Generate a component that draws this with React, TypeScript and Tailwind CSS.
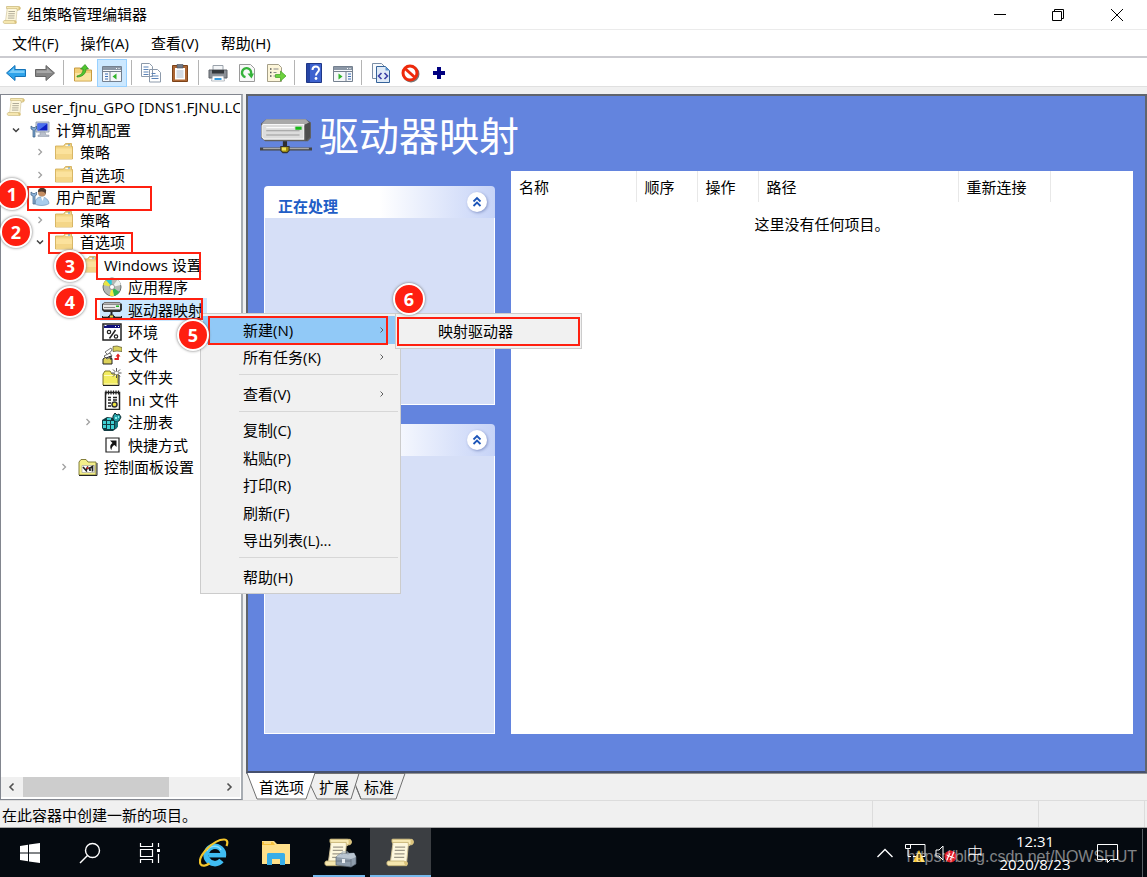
import type { ReactNode } from "react";

type IconName =
    | "scroll"
    | "computer"
    | "user"
    | "folder"
    | "disc"
    | "drive"
    | "env"
    | "file"
    | "newFolder"
    | "ini"
    | "registry"
    | "shortcut"
    | "panel";

interface TreeNode {
    label: string;
    icon: IconName;
    level: number;
    state?: "open" | "closed";
    selected?: boolean;
}

const nodes: TreeNode[] = [
    { label: "user_fjnu_GPO [DNS1.FJNU.LOCAL]", icon: "scroll", level: 0 },
    { label: "计算机配置", icon: "computer", level: 1, state: "open" },
    { label: "策略", icon: "folder", level: 2, state: "closed" },
    { label: "首选项", icon: "folder", level: 2, state: "closed" },
    { label: "用户配置", icon: "user", level: 1, state: "open" },
    { label: "策略", icon: "folder", level: 2, state: "closed" },
    { label: "首选项", icon: "folder", level: 2, state: "open" },
    { label: "Windows 设置", icon: "folder", level: 3, state: "open" },
    { label: "应用程序", icon: "disc", level: 4 },
    { label: "驱动器映射", icon: "drive", level: 4, selected: true },
    { label: "环境", icon: "env", level: 4 },
    { label: "文件", icon: "file", level: 4 },
    { label: "文件夹", icon: "newFolder", level: 4 },
    { label: "Ini 文件", icon: "ini", level: 4 },
    { label: "注册表", icon: "registry", level: 4, state: "closed" },
    { label: "快捷方式", icon: "shortcut", level: 4 },
    { label: "控制面板设置", icon: "panel", level: 3, state: "closed" },
];

const indents = ["pl-0", "pl-[3px]", "pl-[27px]", "pl-[51px]", "pl-[75px]"];

const columns = [
    { label: "名称", width: "w-[125px]" },
    { label: "顺序", width: "w-[61px]" },
    { label: "操作", width: "w-[61px]" },
    { label: "路径", width: "w-[200px]" },
    { label: "重新连接", width: "w-[92px]" },
];

interface MenuEntry {
    label: string;
    height: string;
    sub?: boolean;
    active?: boolean;
}

const menuGroups: MenuEntry[][] = [
    [
        { label: "新建(N)", height: "h-7", sub: true, active: true },
        { label: "所有任务(K)", height: "h-[27px]", sub: true },
    ],
    [{ label: "查看(V)", height: "h-7", sub: true }],
    [
        { label: "复制(C)", height: "h-[27px]" },
        { label: "粘贴(P)", height: "h-7" },
        { label: "打印(R)", height: "h-[27px]" },
        { label: "刷新(F)", height: "h-7" },
        { label: "导出列表(L)...", height: "h-[27px]" },
    ],
    [{ label: "帮助(H)", height: "h-7" }],
];

const marks = [
    { n: 1, badge: "left-[-4px] top-[178px]", box: "left-[27px] top-[186px] w-[125px] h-[25px]" },
    { n: 2, badge: "left-0 top-[216px]", box: "left-[48px] top-[232px] w-[85px] h-[22px]" },
    { n: 3, badge: "left-[54px] top-[250px]", box: "left-[96px] top-[252px] w-[105px] h-[28px]" },
    { n: 4, badge: "left-[54px] top-[286px]", box: "left-[95px] top-[298px] w-[108px] h-[22px]" },
    { n: 5, badge: "left-[177px] top-[319px]", box: "left-[208px] top-[316px] w-[180px] h-[29px]" },
    { n: 6, badge: "left-[393px] top-[283px]", box: "left-[397px] top-[317px] w-[183px] h-[29px]" },
];

function Scroll({ size = 20 }: { size?: number }) {
    return (
        <svg width={size} height={size} viewBox="0 0 20 20">
            <path d="M5 1.500h11v4h-1L14 16H3.500L5 5z" fill="#fdf7dd" stroke="#cdbf94" strokeWidth=".6" />
            <path d="M4.500 1.500H17c1.800 0 1.800 3.500 0 3.500h-2V3.500H4.500z" fill="#f7e9b4" stroke="#c7b579" strokeWidth=".6" />
            <path d="M16.500 1.500c2.500 0 2.500 3.500 0 3.500z" fill="#dbc37c" />
            <path d="M2 15.500h10.500l1.500 3H2.500c-1.500 0-1.700-2.500-.500-3z" fill="#f5e6ae" stroke="#c7b579" strokeWidth=".6" />
            <path d="M12.500 15.500c2.500 0 3 2 1.500 3-1.500-.500-2-1.500-1.500-3z" fill="#dbc37c" />
            <path d="M6.500 6.500h6.500M6.300 8.700h6.500M6.100 10.900h6.500M5.900 13.100h6.500" stroke="#9d9888" strokeWidth=".8" />
        </svg>
    );
}

function DriveArt({ width, height }: { width: number; height: number }) {
    return (
        <svg width={width} height={height} viewBox="0 0 50 34">
            <path d="M6 1h38l5 3v15l-3 3H5l-4-3V5z" fill="#5f5f5f" />
            <path d="M6 1h38l3 3-4 3H3L2 5z" fill="#a9a9a9" />
            <path d="M3 6h39v14H4l-2-2V7z" fill="#dcdcdc" stroke="#f7f7f7" />
            <path d="M43 6l5-2v14l-4 4z" fill="#4d4d4d" />
            <path d="M6 12h32M6 16h32" stroke="#9a9a9a" />
            <path d="M6 9h27" stroke="#fff" />
            <rect x="34" y="8" width="6" height="3" fill="#18b818" />
            <path d="M24 22v5" stroke="#303030" strokeWidth="4" />
            <path d="M0 29.500h50" stroke="#454545" strokeWidth="3" />
            <path d="M3 29h44" stroke="#a8a8a8" strokeWidth="1.500" />
            <path d="M20 27h8v4l-2 2h-4l-2-2z" fill="#9c8b10" stroke="#333" />
            <rect x="21" y="28" width="4" height="3" fill="#f2e25b" />
        </svg>
    );
}

function TreeIcon({ name }: { name: IconName }) {
    if (name === "scroll") return <Scroll size={20} />;
    const art: Record<Exclude<IconName, "scroll">, ReactNode> = {
        folder: (
            <>
                <path d="M1.500 4h8l2-2.500h6v3h1V17h-17z" fill="#f3d583" stroke="#cfa84e" strokeWidth=".8" />
                <path d="M11 2.500h5.500v2h-5.500z" fill="#fffbe8" stroke="#d9b962" strokeWidth=".5" />
                <path d="M14 2.500h2v1h-2z" fill="#4f94c9" />
                <path d="M2 6.500h16V16.500H2z" fill="#fbe29d" />
                <path d="M2 12h16v4.500H2z" fill="#f4d688" />
            </>
        ),
        drive: (
            <>
                <path d="M3 2h14l3 2v6l-2 2H2l-2-2V4z" fill="#333" />
                <path d="M3 2.500h14l2 1.500H1z" fill="#b5b5b5" />
                <path d="M1 4.500h17v5H2l-1-1z" fill="#e9e9e9" />
                <path d="M2 7.500h11" stroke="#8a8a8a" />
                <rect x="14" y="5.500" width="3" height="1.500" fill="#1fb51f" />
                <path d="M9.500 12v3" stroke="#222" strokeWidth="2" />
                <path d="M0 17h20" stroke="#222" strokeWidth="2" />
                <path d="M1 16.500h5M13 16.500h6" stroke="#a8a8a8" />
                <path d="M7.500 15h4v3h-4z" fill="#e8d640" stroke="#333" />
            </>
        ),
        computer: (
            <>
                <path d="M6 2h13v10H6z" fill="#d4dbe4" stroke="#8492a5" strokeWidth=".8" />
                <path d="M7.500 3.500h10v7h-10z" fill="#0d20c4" />
                <path d="M7.500 3.500h10l-9 7h-1z" fill="#4a70ee" />
                <path d="M10 12h5l1 3h3v1.500H8V15h2z" fill="#b9c0cb" stroke="#8993a2" strokeWidth=".5" />
                <path d="M1 6v3l2 1v7h2v-7l1.500-1V6L5 7.500H3z" fill="#7ca5cf" stroke="#35597e" strokeWidth=".7" />
            </>
        ),
        user: (
            <>
                <circle cx="12" cy="5.500" r="4" fill="#c58f64" />
                <path d="M8 5c-.500-5 7-5.500 8.200-1.500L15.500 7c-1-3-4-3-7.500-2z" fill="#4b3a30" />
                <path d="M5 17c0-5 3-7 6-7 5 0 7.500 3 8 6.500-3 2.500-11 2.500-14 .500z" fill="#a9cdec" stroke="#6a93ba" strokeWidth=".7" />
                <path d="M11 10l1.500 4L14 10z" fill="#fff" />
                <path d="M1 5v3l2 1v8h2V9l1.500-1V5L5 6.500H3z" fill="#8db1d6" stroke="#3f6185" strokeWidth=".7" />
            </>
        ),
        disc: (
            <>
                <circle cx="10" cy="10" r="9" fill="#b4b9b4" stroke="#666a6a" />
                <path d="M10 10L4 3.200C6 1.500 8 1 9.500 1z" fill="#28c8d8" />
                <path d="M10 10L1.200 8C1.700 6 2.700 4.300 4 3.200z" fill="#e9e442" />
                <path d="M10 10l7.500 5c-1.500 2-3.500 3.500-5.500 4z" fill="#32b650" />
                <path d="M10 10l2 9c-1.500.200-3.500 0-4.500-.400z" fill="#f4ef42" />
                <path d="M10 10L18.900 8c-.500-2-1.500-4-3.400-5.200z" fill="#edf1ed" />
                <circle cx="10" cy="10" r="2.500" fill="#fff" stroke="#777" strokeWidth=".7" />
            </>
        ),
        env: (
            <>
                <path d="M1 2h18v16H1z" fill="#fff" stroke="#222" strokeWidth="1.500" />
                <path d="M2 3h16v3H2z" fill="#10107c" />
                <path d="M2.500 3.500h2M13 4.500h1M16 4.500h1" stroke="#fff" />
                <path d="M13.500 8l-6 8.500" stroke="#222" strokeWidth="1.500" />
                <circle cx="7" cy="10" r="1.700" fill="none" stroke="#222" strokeWidth="1.200" />
                <circle cx="14" cy="14.500" r="1.700" fill="none" stroke="#222" strokeWidth="1.200" />
            </>
        ),
        file: (
            <>
                <path d="M11 1.500l4-.500 5 1.500v4l-5-.500-4 .500z" fill="#d9d05c" stroke="#55502a" strokeWidth=".7" />
                <path d="M3 7l6-4 1 2-4 5z" fill="#fff" stroke="#555" strokeWidth=".8" />
                <path d="M1 14l3-2 6 1.500V19H1z" fill="#ddd25a" stroke="#222" />
                <path d="M2 11l6-3 2 3-5 3z" fill="#fff" stroke="#333" strokeWidth=".7" />
                <path d="M4 13l5-2v4" fill="none" stroke="#222" />
                <path d="M12.500 14h3.500v-3" fill="none" stroke="#e32020" strokeWidth="1.800" />
                <path d="M13.500 11.500L16 8.500l2.500 3z" fill="#e32020" />
            </>
        ),
        newFolder: (
            <>
                <path d="M1 7l2-3h5l2 3h6v11H1z" fill="#f2ec60" stroke="#6f6a20" strokeWidth=".9" />
                <path d="M2 8.500h13M2 17h14" stroke="#fffbc0" />
                <path d="M1 18.500h16V8" fill="none" stroke="#222" />
                <path d="M14.500 1v10M9.500 6h10M11 2.500l7 7M18 2.500l-7 7" stroke="#444" strokeWidth=".9" />
                <circle cx="14.500" cy="6" r="1.600" fill="#fff" />
            </>
        ),
        ini: (
            <>
                <path d="M3.500 2.500h14v17h-14z" fill="#fff" stroke="#222" strokeWidth="1.500" />
                <path d="M4 .500v4M6.500.500v4M9 .500v4M11.500.500v4M14 .500v4M16.500.500v4" stroke="#222" strokeWidth="1.200" />
                <path d="M6 7.500h3M11 7.500h4M6 10h3M11 10h4M6 13h3M6 16h3" stroke="#222" strokeWidth="1.500" />
                <circle cx="12.500" cy="14.500" r="2.500" fill="#f0e540" stroke="#333" strokeWidth="1.500" />
            </>
        ),
        registry: (
            <>
                <path d="M0 8l5-3 8 1 2 2v8l-4 3H2l-2-3z" fill="#123c42" />
                <path d="M1 9h3v3H1zM5 9h3v3H5zM9 9h3v3H9zM1 13h3v3H1zM5 13h3v4H5zM9 13h3v4H9zM5 6h4v2H5z" fill="#3fd0d4" />
                <path d="M11 4l2-3 2 2 2-1 2 3-2 4-4 1-2-3z" fill="#27a5ac" stroke="#0c2c30" />
                <path d="M13 5h2v2h-2zM16 4h1v2h-1z" fill="#8ff0f0" />
                <path d="M13 10l3-1v6l-3 2z" fill="#16777f" />
            </>
        ),
        shortcut: (
            <>
                <path d="M4 3h13v14H4z" fill="#fff" stroke="#222" strokeWidth="1.200" />
                <path d="M8 5.500h6.500V12l-2-2c-2 1-3 2.500-3 5-2-2-1.500-5.500 1-7z" fill="#111" />
            </>
        ),
        panel: (
            <>
                <path d="M1 5l2-2.500h5L10 5h8v13H1z" fill="#f3ee8a" stroke="#77722c" strokeWidth=".9" />
                <path d="M1 18.500h18V6" fill="none" stroke="#222" />
                <path d="M4 8.500h12.500v7H4z" fill="#fff" stroke="#999" strokeWidth=".6" />
                <path d="M5 10l4 4.500M10 9.500l-2 4M10.500 12l4-2.500v5M12 10v4" fill="none" stroke="#222" strokeWidth="1.700" />
                <circle cx="9.500" cy="11" r="1" fill="#d22" />
            </>
        ),
    };
    return (
        <svg width="20" height="20" viewBox="0 0 20 20">
            {art[name]}
        </svg>
    );
}

function Twisty({ open }: { open: boolean }) {
    return (
        <svg width="10" height="10" viewBox="0 0 10 10" fill="none">
            {open ? (
                <path d="M2 3.500L5 6.500l3-3" stroke="#404040" strokeWidth="1.500" />
            ) : (
                <path d="M3.500 2L6.500 5l-3 3" stroke="#a0a0a0" strokeWidth="1.300" />
            )}
        </svg>
    );
}

function ToolButton({ label, active, children }: { label: string; active?: boolean; children: ReactNode }) {
    return (
        <button
            aria-label={label}
            className={
                active
                    ? "flex h-7 w-[30px] items-center justify-center border border-[#99d1ff] bg-[#cce8ff]"
                    : "flex h-7 w-[29px] items-center justify-center"
            }
        >
            <svg width="20" height="20" viewBox="0 0 20 20">
                {children}
            </svg>
        </button>
    );
}

function ToolDivider() {
    return <span className="mx-1 h-[25px] w-px bg-[#b4b4b4]" />;
}

function Toolbar() {
    return (
        <div className="flex h-7 items-center pt-px pl-px">
            <ToolButton label="后退">
                <path d="M.500 10L9 2.500V6.500h10.500v7H9v4z" fill="#2ea3ea" stroke="#1573b8" />
                <path d="M2.500 10L8 5v2.500h10.500V10z" fill="#7accf8" />
            </ToolButton>
            <ToolButton label="前进">
                <path d="M19.500 10L11 2.500V6.500H.500v7H11v4z" fill="#858585" stroke="#666" />
                <path d="M17.500 10L12 5v2.500H1.500V10z" fill="#a8a8a8" />
            </ToolButton>
            <ToolDivider />
            <ToolButton label="上移一级">
                <path d="M1.500 5h6l2 2h9v11h-17z" fill="#f2cf78" stroke="#c79b41" />
                <path d="M2 10h16v7.500H2z" fill="#fae3a1" />
                <path d="M4 13c4-1 6-3 6-7H7.500L12 1.500 15.500 6H13c0 5-4 8-9 8z" fill="#4fc62f" stroke="#2c8a1c" strokeWidth=".7" />
            </ToolButton>
            <ToolButton label="显示控制台树" active>
                <path d="M.500 3.500h19v15H.500z" fill="#f5f7fa" stroke="#74808f" />
                <path d="M1 4h18v3H1z" fill="#8b97a6" />
                <path d="M14 5.500h1M16.500 5.500h1" stroke="#fff" />
                <path d="M1 8.500h18M8 8.500v10" stroke="#74808f" />
                <path d="M3 11h3M3 13.500h3M3 16h3" stroke="#3c6fb4" strokeWidth="1.200" />
                <path d="M14.500 10.500v6l-4-3z" fill="#31b52b" />
            </ToolButton>
            <ToolDivider />
            <ToolButton label="复制">
                <path d="M.500.500h8l3 3v10h-11zM8.500 6.500h8l3 3v9.500h-11z" fill="#fff" stroke="#8d9aab" />
                <path d="M2.500 4h5M2.500 6.500h5M2.500 9h5M2.500 11.500h5M10.500 10.500h4M10.500 13h7M10.500 15.500h7" stroke="#5b83b8" />
            </ToolButton>
            <ToolButton label="粘贴">
                <path d="M2.500 2.500h15v16h-15z" fill="#ad6633" stroke="#7b4218" />
                <path d="M5 5h10v11.500H5z" fill="#fff" />
                <path d="M7 1.500h6V5H7z" fill="#6f7886" stroke="#474e59" strokeWidth=".6" />
                <path d="M6.500 8h7M6.500 10h7M6.500 12h7M6.500 14h7" stroke="#a9b9cc" />
            </ToolButton>
            <ToolDivider />
            <ToolButton label="打印">
                <path d="M5 2.500h10V9H5z" fill="#f4f6f8" stroke="#9aa2ab" />
                <path d="M1 7h18v8H1z" fill="#8b9096" stroke="#5c6167" />
                <path d="M4 7h12v3.500H4z" fill="#34383c" />
                <path d="M4.500 13h11l1 5h-13z" fill="#fff" stroke="#9aa2ab" strokeWidth=".7" />
                <path d="M6.500 15h7v2h-7z" fill="#3c9ee0" />
            </ToolButton>
            <ToolButton label="刷新">
                <path d="M2.500 1.500h11l4 4v13h-15z" fill="#f8f8f8" stroke="#9a9a9a" />
                <path d="M8.500 14.200A4.600 4.600 0 1 1 14 11" fill="none" stroke="#35b23a" strokeWidth="2.400" />
                <path d="M10.500 10.500h6.500l-2.500 5z" fill="#35b23a" />
            </ToolButton>
            <ToolButton label="导出列表">
                <path d="M1.500 1.500h11l3 3v14h-14z" fill="#fdf6da" stroke="#a59f89" />
                <path d="M4 6h1.500M4 9.500h1.500M4 13h1.500" stroke="#555" strokeWidth="1.500" />
                <path d="M7.500 6h5M7.500 9.500h3M7.500 13h3" stroke="#8a8a8a" />
                <path d="M9.500 11.500h5V8l5.500 5-5.500 5v-3.500h-5z" fill="#6dd23e" stroke="#3fa022" strokeWidth=".7" />
            </ToolButton>
            <ToolDivider />
            <ToolButton label="帮助">
                <path d="M2.500.500h15v19h-15z" fill="#3d62cf" stroke="#1f3787" />
                <path d="M3 1h3v18H3z" fill="#2544a5" />
                <path d="M8.500 7c0-4.500 6.500-4.500 6.500-.500 0 3-3 2.500-3 6" fill="none" stroke="#fff" strokeWidth="2" />
                <circle cx="12" cy="15.500" r="1.400" fill="#fff" />
            </ToolButton>
            <ToolButton label="显示操作窗格">
                <path d="M.500 3.500h19v15H.500z" fill="#f5f7fa" stroke="#74808f" />
                <path d="M1 4h18v3H1z" fill="#8b97a6" />
                <path d="M14 5.500h1M16.500 5.500h1" stroke="#fff" />
                <path d="M1 8.500h18M13 8.500v10" stroke="#74808f" />
                <path d="M15 11h3M15 13.500h3M15 16h3" stroke="#3c6fb4" strokeWidth="1.200" />
                <path d="M5.500 10.500v6l4-3z" fill="#31b52b" />
            </ToolButton>
            <ToolDivider />
            <ToolButton label="显示 XML">
                <path d="M1.500.500h9l3 3v12h-12z" fill="#f7fafd" stroke="#7b8ea6" />
                <path d="M5.500 3.500h9l4 4v12h-13z" fill="#dfeaf7" stroke="#35639a" />
                <path d="M14.500 3.500v4h4z" fill="#5a94cf" />
                <path d="M10.500 10l-3 3 3 3M13.500 10l3 3-3 3" fill="none" stroke="#3a3fa5" strokeWidth="1.600" />
            </ToolButton>
            <ToolButton label="停用">
                <circle cx="11" cy="11" r="8.500" fill="#777" />
                <circle cx="10" cy="10" r="7" fill="#fff" stroke="#ee2a0c" strokeWidth="3" />
                <path d="M5 5.500l10 9" stroke="#ee2a0c" strokeWidth="3" />
            </ToolButton>
            <ToolButton label="新建">
                <path d="M8 4h4v4h4v4h-4v4H8v-4H4V8h4z" fill="#000080" />
            </ToolButton>
        </div>
    );
}

function Tree() {
    return (
        <aside className="flex w-[243px] shrink-0 flex-col border border-r-2 border-[#82868f] border-r-[#a8adb3] bg-white pr-px pb-[2px]">
            <ul className="flex-1 overflow-hidden pt-px">
                {nodes.map((node, i) => (
                    <li
                        key={i}
                        className={`flex items-center whitespace-nowrap odd:h-[22px] even:h-[23px] ${indents[node.level]}`}
                    >
                        {node.level > 0 && (
                            <span className="flex w-6 shrink-0 justify-center">
                                {node.state && <Twisty open={node.state === "open"} />}
                            </span>
                        )}
                        <span
                            className={
                                node.selected
                                    ? "flex h-full items-center bg-[#cce8ff] pr-1"
                                    : "flex h-full items-center"
                            }
                        >
                            <span className={node.level === 0 ? "mr-[6px] ml-[5px]" : "mr-[6px] ml-[2px]"}>
                                <TreeIcon name={node.icon} />
                            </span>
                            {node.label}
                        </span>
                    </li>
                ))}
            </ul>
            <div className="flex h-5 bg-[#f0f0f0]">
                <button aria-label="向左滚动" className="flex w-[22px] items-center justify-center">
                    <svg width="10" height="10" viewBox="0 0 10 10" fill="none">
                        <path d="M6.500 1.500L3 5l3.500 3.500" stroke="#505050" strokeWidth="1.600" />
                    </svg>
                </button>
                <div className="flex-1">
                    <div className="h-full w-3/4 bg-[#cdcdcd]" />
                </div>
                <button aria-label="向右滚动" className="flex w-[22px] items-center justify-center">
                    <svg width="10" height="10" viewBox="0 0 10 10" fill="none">
                        <path d="M3.500 1.500L7 5 3.500 8.500" stroke="#505050" strokeWidth="1.600" />
                    </svg>
                </button>
            </div>
        </aside>
    );
}

function SidePanel({ title, className }: { title: string; className: string }) {
    return (
        <section className={`flex flex-col ${className}`}>
            <header className="flex h-8 items-center justify-between rounded-t bg-linear-to-r from-white from-50% to-[#c6d3f7] pr-2 pb-px pl-[14px]">
                <h2 className="pt-2 font-bold text-[#215dc6]">{title}</h2>
                <button
                    aria-label="折叠"
                    className="flex h-5 w-5 items-center justify-center rounded-full bg-white shadow-[1px_1px_3px_#8797c8]"
                >
                    <svg width="12" height="12" viewBox="0 0 12 12" fill="none" stroke="#1c55b8" strokeWidth="1.800">
                        <path d="M2.500 5.500L6 2l3.500 3.500M2.500 10L6 6.500 9.500 10" />
                    </svg>
                </button>
            </header>
            <div className="flex-1 border border-t-0 border-white bg-[#d6dff7]" />
        </section>
    );
}

function DriveMaps() {
    return (
        <main className="flex min-w-0 flex-1 flex-col">
            <div className="flex flex-1 flex-col border-2 border-[#60646c] border-b-[#45506e] bg-[#6384de] pr-3 pb-[37px] pl-4">
                <h1 className="flex h-[75px] items-center gap-[7px] pt-1 text-[40px] leading-none font-normal text-white">
                    <span className="-ml-1">
                        <DriveArt width={52} height={36} />
                    </span>
                    驱动器映射
                </h1>
                <div className="flex flex-1 gap-4">
                    <div className="flex w-[231px] shrink-0 flex-col gap-[19px] pt-[15px]">
                        <SidePanel title="正在处理" className="h-[219px]" />
                        <SidePanel title="描述" className="flex-1" />
                    </div>
                    <div className="flex-1 bg-white">
                        <table className="w-full table-fixed">
                            <thead>
                                <tr className="h-[31px]">
                                    {columns.map((c) => (
                                        <th
                                            key={c.label}
                                            className={`border-r border-[#e8e8e8] pl-2 text-left font-normal ${c.width}`}
                                        >
                                            {c.label}
                                        </th>
                                    ))}
                                    <th />
                                </tr>
                            </thead>
                            <tbody>
                                <tr className="h-11">
                                    <td colSpan={6} className="text-center">
                                        这里没有任何项目。
                                    </td>
                                </tr>
                            </tbody>
                        </table>
                    </div>
                </div>
            </div>
            <div className="relative flex h-[27px] items-center border-t border-[#909090]">
                <svg width="162" height="27" viewBox="0 0 162 27" className="absolute top-[-1px] left-0">
                    <path d="M105 .500h54L150 26H115L105 .500" fill="#f0f0f0" stroke="#707070" />
                    <path d="M59 .500h54L105 26H71L59 .500" fill="#f0f0f0" stroke="#707070" />
                    <path d="M110 14l5 12" stroke="#707070" />
                    <path d="M1 0h68L60 26H11z" fill="#fff" />
                    <path d="M1 0l10 26h49L69 0" fill="none" stroke="#707070" />
                </svg>
                <div role="tablist" className="relative flex pb-px pl-[13px]">
                    <button role="tab" aria-selected="true" className="w-[60px] text-left">
                        首选项
                    </button>
                    <button role="tab" className="w-[45px] text-left">
                        扩展
                    </button>
                    <button role="tab">标准</button>
                </div>
            </div>
        </main>
    );
}

function ContextMenu() {
    return (
        <div
            role="menu"
            className="absolute top-[313px] left-[200px] w-[201px] border border-[#ccc] bg-[#f1f1f1] p-[2px]"
        >
            {menuGroups.map((group, g) => (
                <div key={g}>
                    {g > 0 && (
                        <div className="h-[9px] pt-[3px] pl-9">
                            <div className="h-px bg-[#d7d7d7]" />
                        </div>
                    )}
                    {group.map((item) => (
                        <button
                            key={item.label}
                            role="menuitem"
                            className={`flex w-full items-center justify-between pr-3 pb-px pl-10 ${item.height} ${item.active ? "bg-[#91c9f7]" : ""}`}
                        >
                            {item.label}
                            {item.sub && (
                                <svg width="8" height="8" viewBox="0 0 8 8" fill="none">
                                    <path d="M2.500 1.500L5 4 2.500 6.500" stroke="#606060" />
                                </svg>
                            )}
                        </button>
                    ))}
                </div>
            ))}
        </div>
    );
}

function Taskbar() {
    return (
        <footer className="relative flex h-[49px] items-stretch bg-[#050a10] text-white">
            <button aria-label="开始" className="flex w-[60px] items-center justify-center">
                <svg width="20" height="20" viewBox="0 0 20 20" fill="#fff">
                    <path d="M0 3l8-1.200v7.700H0zM9 1.600L20 0v9.500H9zM0 10.500h8v7.700L0 17zM9 10.500h11V20L9 18.400z" />
                </svg>
            </button>
            <button aria-label="搜索" className="flex w-[60px] items-center justify-center">
                <svg width="22" height="22" viewBox="0 0 22 22" fill="none" stroke="#fff" strokeWidth="1.400">
                    <circle cx="13.500" cy="8.500" r="7" />
                    <path d="M8.500 13.500L1 21" />
                </svg>
            </button>
            <button aria-label="任务视图" className="flex w-[60px] items-center justify-center">
                <svg width="22" height="20" viewBox="0 0 22 20" fill="none" stroke="#fff" strokeWidth="1.200">
                    <path d="M1.500 0v3.500h12V0M1.500 20v-3.500h12V20M1.500 6.500h12v7h-12zM19.500 0v4M19.500 11v9" />
                    <path d="M18 6h3v3h-3z" fill="#fff" stroke="none" />
                </svg>
            </button>
            <button aria-label="Internet Explorer" className="ml-[3px] flex w-[62px] items-center justify-center">
                <svg width="30" height="30" viewBox="0 0 30 30" fill="none">
                    <path d="M24.500 17.500A8.700 8.700 0 1 0 22.500 22.500" stroke="#3fbcf2" strokeWidth="5.500" />
                    <path d="M10 17.200h17" stroke="#3fbcf2" strokeWidth="4.500" />
                    <path d="M8 13c1.500-5 11-7 14-1" stroke="#8fe0fb" strokeWidth="1.500" />
                    <path d="M27.500 8c1.500-3.500 1-6.500-2.500-6.500C15 1.500-2 18 1.500 26c1.500 3 6 1.500 9-.500" stroke="#f4c52b" strokeWidth="2.200" />
                </svg>
            </button>
            <button aria-label="文件资源管理器" className="flex w-[62px] items-center justify-center">
                <svg width="28" height="24" viewBox="0 0 28 24">
                    <path d="M0 0h12l3 3h13v20H0z" fill="#ffe08a" />
                    <path d="M0 1h11l2 3H0z" fill="#f7c23d" />
                    <path d="M2 2h7" stroke="#fff4cd" />
                    <path d="M5 23V14c0-2 1-2 2-2h14c2 0 2 1 2 2v10h-5v-6h-8v6H5z" fill="#38aee8" />
                </svg>
            </button>
            <button aria-label="组策略管理" className="ml-px flex w-[61px] items-stretch justify-center">
                <span className="relative flex w-[52px] items-center justify-center border-b-2 border-[#76b9ed] pt-px">
                    <Scroll size={31} />
                    <svg width="22" height="17" viewBox="0 0 22 17" className="absolute right-2 bottom-[7px]">
                        <path d="M1 6l4-3 14-1 2 4v7l-5 3L1 14z" fill="#8e9cab" stroke="#5a6672" strokeWidth=".7" />
                        <path d="M1 6l4-3 14-1 2 4-5 2z" fill="#b9c5d1" />
                        <path d="M7 4V1h6v3" fill="none" stroke="#9ba9b6" />
                        <path d="M16 8v8M1 10h15" stroke="#6a7784" />
                        <path d="M7 8h3v4H7z" fill="#e9edf1" />
                    </svg>
                </span>
            </button>
            <button
                aria-label="组策略管理编辑器"
                className="ml-px flex w-[61px] items-center justify-center border-b-2 border-[#76b9ed] bg-[#3b3e42] pt-px"
            >
                <Scroll size={31} />
            </button>

            <div className="ml-auto flex items-center pr-1">
                <button aria-label="显示隐藏的图标" className="mr-3 flex">
                    <svg width="16" height="10" viewBox="0 0 16 10" fill="none" stroke="#fff" strokeWidth="1.400">
                        <path d="M.500 9L8 1.500 15.500 9" />
                    </svg>
                </button>
                <svg width="21" height="20" viewBox="0 0 21 20" fill="none" className="mr-[9px]">
                    <path d="M4 1.500h16v12H8M.500 1.500h5v4h-5zM3 5.500v8h3" stroke="#fff" />
                    <path d="M14 7l6 12H8z" fill="#f8c62c" />
                    <path d="M14 11v4M14 16.500v1.500" stroke="#222" strokeWidth="1.300" />
                </svg>
                <svg width="22" height="20" viewBox="0 0 22 20" fill="none" className="mr-[10px]">
                    <path d="M1 7h3l4-4v14l-4-4H1z" stroke="#fff" />
                    <circle cx="15.500" cy="13.500" r="6" fill="#e11d26" />
                    <path d="M12 17l3-7M15 17l4-8M11.500 12l8 3" stroke="#fff" />
                </svg>
                <span className="w-4 text-center text-base leading-5 font-light">中</span>
                <div className="ml-[10px] flex w-[84px] flex-col items-center text-[15px] leading-[23px]">
                    <time>12:31</time>
                    <time>2020/8/23</time>
                </div>
                <button aria-label="通知" className="ml-5 flex">
                    <svg width="21" height="20" viewBox="0 0 21 20" fill="none" stroke="#fff">
                        <path d="M.500 1.500h20v15h-7l-3 3v-3h-10z" />
                    </svg>
                </button>
                <span className="ml-6 h-12 w-px bg-[#596066]" />
            </div>
            <span className="absolute right-[10px] bottom-2 font-['Liberation_Sans',sans-serif] text-base leading-6 text-[#ffffff80]">
                https://blog.csdn.net/NOWSHUT
            </span>
        </footer>
    );
}

export default function App() {
    return (
        <div className="relative flex min-h-screen flex-col overflow-hidden bg-[#f0f0f0] font-['Open_Sans','Noto_Sans_CJK_SC',sans-serif] text-[15px] leading-5 text-black">
            <div className="flex h-[30px] items-center border-b border-[#ebebeb] bg-white pl-[2px]">
                <Scroll size={20} />
                <span className="ml-[5px] flex-1 pb-[2px]">组策略管理编辑器</span>
                <button aria-label="最小化" className="flex w-[58px] justify-center">
                    <svg width="12" height="12" viewBox="0 0 12 12" stroke="#000">
                        <path d="M0 5.500h12" />
                    </svg>
                </button>
                <button aria-label="还原" className="flex w-[58px] justify-center">
                    <svg width="12" height="12" viewBox="0 0 12 12" fill="none" stroke="#000">
                        <path d="M.500 2.500h9v9h-9zM2.500 2.500v-2h9v9h-2" />
                    </svg>
                </button>
                <button aria-label="关闭" className="flex w-[60px] justify-center">
                    <svg width="12" height="12" viewBox="0 0 12 12" stroke="#000">
                        <path d="M0 0l12 12M12 0L0 12" />
                    </svg>
                </button>
            </div>

            <nav className="flex h-7 items-center gap-[22px] border-b-2 border-[#cbcbd0] bg-white pb-px pl-3">
                <button>文件(F)</button>
                <button>操作(A)</button>
                <button>查看(V)</button>
                <button>帮助(H)</button>
            </nav>
            <div className="border-b border-[#e0e0e0] bg-white">
                <Toolbar />
            </div>

            <div className="flex flex-1 gap-[3px] pt-[7px]">
                <Tree />
                <DriveMaps />
            </div>

            <div className="flex h-7 items-stretch border-t border-b border-[#dcdcdc] border-b-[#a8a8a8]">
                <span className="flex flex-1 items-center pt-[2px] pl-[2px]">在此容器中创建一新的项目。</span>
                <span className="w-[166px] border-l border-[#dcdcdc]" />
                <span className="mr-[2px] w-[107px] border-x border-[#dcdcdc]" />
            </div>

            <Taskbar />

            <ContextMenu />
            <div
                role="menu"
                className="absolute top-[313px] left-[395px] w-[187px] border border-[#ccc] bg-[#f1f1f1] p-[3px]"
            >
                <button role="menuitem" className="flex h-7 w-full items-center pb-px pl-[39px]">
                    映射驱动器
                </button>
            </div>

            {/* Step markers */}
            {marks.map((m) => (
                <div key={m.n}>
                    <span className={`absolute border-2 border-[#ff2010] ${m.box}`} />
                    <span
                        className={`absolute flex h-8 w-8 items-center justify-center rounded-full border-2 border-white bg-[#ff1f10] pb-px text-lg font-bold text-white shadow-[0_0_3px_#707070] ${m.badge}`}
                    >
                        {m.n}
                    </span>
                </div>
            ))}
        </div>
    );
}
